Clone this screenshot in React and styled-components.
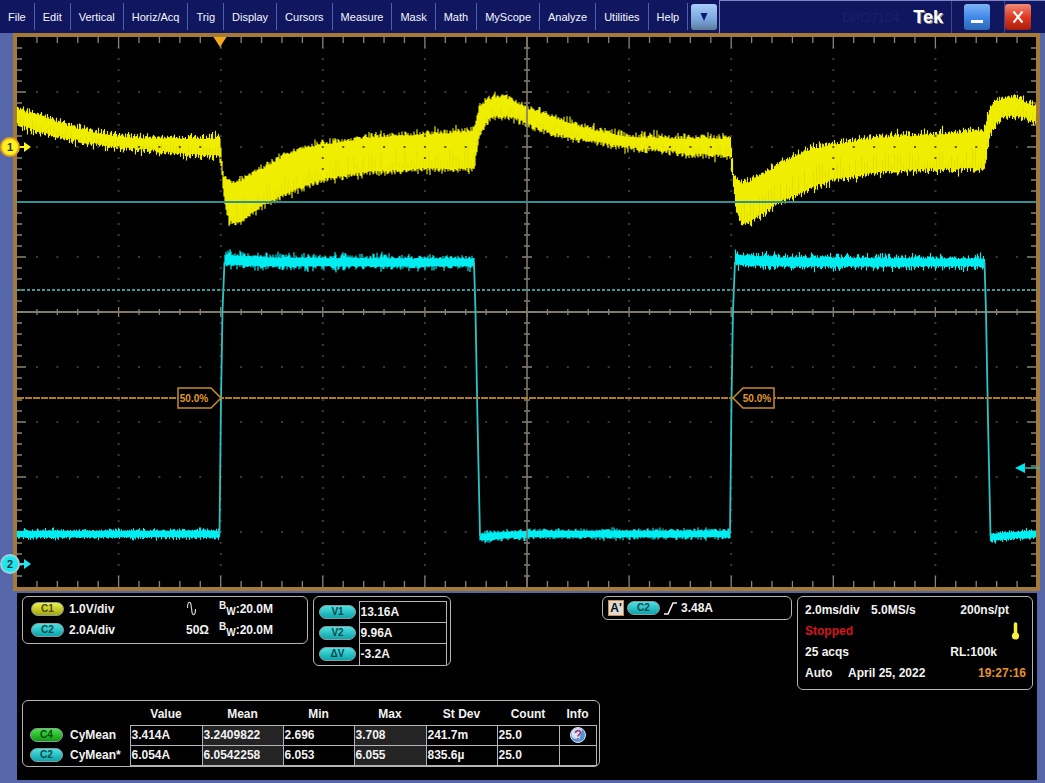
import React from "react";
import styled, { createGlobalStyle } from "styled-components";

const GlobalStyle = createGlobalStyle`
  * {
    box-sizing: border-box;
  }

  body {
    margin: 0;
    background: #5567a9;
    font-family: "Liberation Sans", Arial, sans-serif;
    color: #f2f2f2;
  }
`;

/* ---------- menu bar ---------- */

const MenuBar = styled.header`
  display: flex;
  height: 33px;
  background: #10175f;
`;

const Menu = styled.nav`
  display: flex;
  align-items: stretch;
  padding: 3px 0;
`;

const MenuItem = styled.button`
  padding: 0 8px;
  border: 0;
  border-right: 1px solid #4a60b0;
  background: none;
  color: #f4f6ff;
  font: 11px "Liberation Sans", Arial, sans-serif;
  white-space: nowrap;
`;

const Brand = styled.div`
  display: flex;
  flex: 1;
  align-items: center;
  justify-content: flex-end;
  margin-left: 2px;
  border-top: 1px solid #7a84c4;
  border-left: 1px solid #7a84c4;
`;

const Model = styled.span`
  margin-right: 14px;
  color: #1a2168;
  font-size: 13px;
`;

const Logo = styled.span`
  padding-right: 8px;
  color: #fff;
  font-size: 18px;
  font-weight: bold;
  text-shadow: 1px 1px 0 #8a8a8a;
`;

const WindowSlot = styled.div`
  display: flex;
  align-items: center;
  justify-content: flex-end;
  align-self: stretch;
  width: ${(props) => props.$width}px;
  padding-right: 14px;
  border-left: 1px solid #3b4690;
`;

const SquareButton = styled.button`
  display: flex;
  align-items: center;
  justify-content: center;
  align-self: center;
  width: 26px;
  height: 26px;
  padding: 0;
  border: 0;
  border-radius: 3px;
  background: ${(props) => props.$fill};
`;

const MoreButton = styled(SquareButton)`
  margin-left: 3px;
`;

/* ---------- scope screen ---------- */

const Screen = styled.main`
  margin: 0 5px 0 13px;
  border: 4px solid #a57a36;
  background: #000;
`;

const Plot = styled.svg`
  display: block;
  width: 100%;
  overflow: visible;
`;

/* ---------- readouts ---------- */

const Readouts = styled.section`
  display: flex;
  flex-direction: column;
  align-items: flex-start;
  gap: 10px;
  margin: 2px 8px 4px 17px;
  padding: 3px 4px 13px 5px;
  background: #000;
  font-size: 12px;
  font-weight: bold;
`;

const TopRow = styled.div`
  display: flex;
  align-items: flex-start;
  align-self: stretch;
  gap: 5px;
`;

const Box = styled.div`
  border: 1px solid #b4b4b4;
  border-radius: 6px;
`;

const ChannelBox = styled(Box)`
  width: 286px;
  padding: 1px 8px 3px;
`;

const ChannelRow = styled.div`
  display: grid;
  grid-template-columns: 38px 117px 33px 1fr;
  align-items: center;
  height: 21px;
`;

const Pill = styled.span`
  display: inline-block;
  width: ${(props) => props.$width || 33}px;
  height: 14px;
  border: 1px solid #8c9c9c;
  border-radius: 7px;
  background: linear-gradient(${(props) => props.$from}, ${(props) => props.$to});
  color: ${(props) => props.$ink};
  font-size: 10px;
  line-height: 12px;
  text-align: center;
  vertical-align: middle;
`;

const Limit = styled.span`
  display: flex;
  align-items: center;

  sup,
  sub {
    height: 16px;
    font-size: 10px;
    line-height: 10px;
  }

  sub {
    padding-top: 6px;
  }
`;

const CursorBox = styled(Box)`
  width: 138px;
  padding: 4px 3px 0 5px;
`;

const CursorTable = styled.table`
  width: 100%;
  border-collapse: collapse;

  th {
    width: 40px;
    height: 21px;
    padding: 0;
    line-height: 14px;
    text-align: left;
  }

  td {
    padding: 0 1px;
    border: 1px solid #b4b4b4;
  }

  tr:last-child td {
    border-bottom: 0;
  }
`;

const TriggerBox = styled(Box)`
  display: flex;
  align-items: center;
  gap: 3px;
  width: 190px;
  height: 24px;
  margin-left: auto;
  padding-left: 5px;
`;

const Badge = styled.span`
  width: 16px;
  height: 16px;
  border: 1px solid #d08a4a;
  background: #dcdcdc;
  color: #111;
  line-height: 14px;
  text-align: center;
`;

const TimeBox = styled(Box)`
  width: 236px;
  height: 94px;
  padding: 2px 6px 0 7px;
`;

const TimeRow = styled.div`
  display: flex;
  align-items: center;
  height: 21px;
  padding-right: ${(props) => props.$inset || 0}px;
  color: ${(props) => props.$color || "inherit"};
`;

const First = styled.span`
  min-width: ${(props) => props.$width}px;
`;

const Last = styled.span`
  display: flex;
  margin-left: auto;
  color: ${(props) => props.$color || "inherit"};
`;

const MeasureBox = styled(Box)`
  padding: 3px 2px 0 7px;
`;

const MeasureTable = styled.table`
  border-collapse: collapse;
  table-layout: fixed;
  width: 566px;

  th {
    padding: 0;
  }

  thead th {
    height: 21px;
  }

  tbody th {
    height: 20px;
    text-align: left;
    white-space: nowrap;
  }

  td {
    padding: 0 1px;
    border: 1px solid #b4b4b4;
  }

  td:nth-child(3),
  td:nth-child(5) {
    background: #242424;
  }

  td:last-child {
    text-align: center;
  }
`;

const Name = styled.span`
  margin-left: 7px;
  vertical-align: middle;
`;

const InfoButton = styled.button`
  display: block;
  width: 16px;
  height: 16px;
  margin: 0 auto;
  padding: 0;
  border: 0;
  background: none;
`;

/* ---------- data ---------- */

const MENUS = [
  "File",
  "Edit",
  "Vertical",
  "Horiz/Acq",
  "Trig",
  "Display",
  "Cursors",
  "Measure",
  "Mask",
  "Math",
  "MyScope",
  "Analyze",
  "Utilities",
  "Help",
];

const CYAN = { $from: "#4fe0e0", $to: "#0aa5ab", $ink: "#07484c" };
const YELLOW = { $from: "#eef04a", $to: "#a3a60c", $ink: "#4a4a05" };
const GREEN = { $from: "#4be04b", $to: "#0d9a12", $ink: "#064a08" };

const CURSORS = [
  ["V1", "13.16A"],
  ["V2", "9.96A"],
  ["ΔV", "-3.2A"],
];

const COLUMNS = [
  ["Value", 72],
  ["Mean", 81],
  ["Min", 71],
  ["Max", 72],
  ["St Dev", 71],
  ["Count", 62],
  ["Info", 37],
];

const MEASUREMENTS = [
  {
    source: "C4",
    pill: GREEN,
    name: "CyMean",
    values: ["3.414A", "3.2409822", "2.696", "3.708", "241.7m", "25.0"],
    info: true,
  },
  {
    source: "C2",
    pill: CYAN,
    name: "CyMean*",
    values: ["6.054A", "6.0542258", "6.053", "6.055", "835.6µ", "25.0"],
    info: false,
  },
];

/* ---------- traces ---------- */

const LEFT = 17;
const RIGHT = 1036;
const TOP = 37;
const BOTTOM = 587;
const CX = 527;
const CY = 312;
const DIV_X = 102.1;
const DIV_Y = 55;
const PERIOD = 510.5;

// one load cycle of each trace: [x, upper edge, lower edge]
const VOLTAGE = [
  [220, 139, 156],
  [221, 152, 166],
  [223, 175, 184],
  [225, 179, 204],
  [229, 183, 219],
  [233, 184, 223],
  [240, 182, 221],
  [250, 176, 214],
  [265, 168, 203],
  [280, 159, 196],
  [300, 150, 187],
  [322, 145, 179],
  [350, 141, 174],
  [370, 138, 171],
  [424, 135, 168],
  [474, 132, 168],
  [477, 118, 148],
  [480, 108, 133],
  [485, 103, 123],
  [492, 99, 116],
  [500, 98, 115],
  [510, 100, 116],
  [520, 105, 119],
  [530, 110, 124],
  [543, 115, 129],
  [560, 120, 134],
  [580, 127, 138],
  [600, 132, 142],
  [628, 137, 147],
  [660, 139, 149],
  [690, 139, 153],
  [730.5, 139, 155],
];

const CURRENT_HIGH = [
  [225, 255, 264],
  [240, 256, 265],
  [280, 258, 266],
  [474, 259, 266],
];

const CURRENT_LOW = [
  [480, 534, 540],
  [490, 533, 540],
  [505, 532, 538],
  [530, 531, 537],
  [730.5, 531, 537],
];

function makeNoise(seed) {
  let s = seed;
  return () => {
    s = (s * 16807) % 2147483647;
    return s / 2147483647;
  };
}

function edgesAt(points, x) {
  let i = 1;
  while (i < points.length - 1 && points[i][0] < x) i++;
  const [x0, t0, b0] = points[i - 1];
  const [x1, t1, b1] = points[i];
  const k = (x - x0) / (x1 - x0);
  return [t0 + (t1 - t0) * k, b0 + (b1 - b0) * k];
}

function band(points, spread, ripple, seed) {
  const noise = makeNoise(seed);
  let d = "";
  for (let cycle = -1; cycle <= 1; cycle++) {
    const shift = cycle * PERIOD;
    const end = points[points.length - 1][0];
    for (let x = points[0][0]; x <= end; x++) {
      const px = x + shift;
      if (px < LEFT || px > RIGHT) continue;
      const [top, bottom] = edgesAt(points, x);
      const up = noise() * noise() * spread + (x % 3 === 0 ? ripple : 0);
      const down = noise() * noise() * spread + (x % 3 === 1 ? ripple : 0);
      d += `M${px.toFixed(1)} ${(top - up).toFixed(1)}V${(bottom + down).toFixed(1)}`;
    }
  }
  return d;
}

// faint vertical streaks inside the voltage band
function streaks() {
  const noise = makeNoise(8111);
  let d = "";
  for (let cycle = -1; cycle <= 1; cycle++) {
    for (let x = 228; x <= 730; x += 3) {
      const px = x + cycle * PERIOD;
      if (px < LEFT || px > RIGHT) continue;
      const [top, bottom] = edgesAt(VOLTAGE, x);
      const height = bottom - top;
      d += `M${px.toFixed(1)} ${(bottom - height * noise() * 0.6).toFixed(1)}V${bottom.toFixed(1)}`;
    }
  }
  return d;
}

const voltagePath = band(VOLTAGE, 7, 2, 4241);
const streakPath = streaks();
const highPath = band(CURRENT_HIGH, 7, 0, 977);
const lowPath = band(CURRENT_LOW, 4, 0, 5519);

const columnXs = [-4, -3, -2, -1, 1, 2, 3, 4].map((n) => CX + n * DIV_X);
const rowYs = [-4, -3, -2, -1, 1, 2, 3, 4].map((n) => CY + n * DIV_Y);

function underVoltage(x, y) {
  let phase = x;
  while (phase < 220) phase += PERIOD;
  while (phase > 220 + PERIOD) phase -= PERIOD;
  const [top, bottom] = edgesAt(VOLTAGE, phase);
  return y > top && y < bottom;
}

function graticule() {
  let ticks = "";
  let dots = "";
  let darkDots = "";
  const addDot = (x, y) => {
    const dot = `M${x - 1} ${y}h2`;
    if (underVoltage(x, y)) darkDots += dot;
    else dots += dot;
  };
  for (let n = -24; n <= 24; n++) {
    const x = CX + (n * DIV_X) / 5;
    const major = n % 5 === 0;
    const edge = major ? 11 : 6;
    const mid = major ? 5 : 3;
    ticks += `M${x} ${TOP}v${edge}M${x} ${BOTTOM}v${-edge}M${x} ${CY - mid}v${mid * 2}`;
    rowYs.forEach((y) => addDot(x, y));
  }
  for (let n = -24; n <= 24; n++) {
    const y = CY + (n * DIV_Y) / 5;
    const major = n % 5 === 0;
    const edge = major ? 9 : 5;
    const mid = major ? 5 : 3;
    ticks += `M${LEFT} ${y}h${edge}M${RIGHT} ${y}h${-edge}M${CX - mid} ${y}h${mid * 2}`;
    columnXs.forEach((x) => addDot(x, y));
  }
  return { ticks, dots, darkDots };
}

const { ticks, dots, darkDots } = graticule();

const Marker = ({ y, color, ring, label }) => (
  <g>
    <path d={`M20 ${y}h5`} stroke={color} strokeWidth="2" />
    <path d={`M24 ${y - 5}l7 5l-7 5z`} fill={color} />
    <circle cx="10" cy={y} r="9" fill={color} stroke={ring} strokeWidth="2" />
    <text x="10" y={y + 4} fontSize="11" fontWeight="bold" textAnchor="middle" fill="#333">
      {label}
    </text>
  </g>
);

const Scope = () => (
  <Plot viewBox={`${LEFT} ${TOP} ${RIGHT - LEFT} ${BOTTOM - TOP}`} role="img" aria-label="Waveforms">
    <path d={`M${LEFT} ${CY}H${RIGHT}`} stroke="#81796b" strokeWidth="2" />
    <path d={ticks} stroke="#8a8274" strokeWidth="1.3" />
    <path d={dots} stroke="#77736a" strokeWidth="1.2" />

    <path d={voltagePath} stroke="#f0ee00" strokeWidth="1.15" />
    <path d={streakPath} stroke="#e2de00" strokeWidth="1" />
    <path d={darkDots} stroke="#2c2a08" strokeWidth="1.5" />
    <path d={highPath} stroke="#00eef2" strokeWidth="1.15" />
    <path d={lowPath} stroke="#00eef2" strokeWidth="1.15" />
    {[0, PERIOD].map((shift) => (
      <g key={shift} fill="none" stroke="#2cc4c4" strokeWidth="1.8">
        <path d={`M${219.5 + shift} 534L${221 + shift} 400L${222.5 + shift} 310L${224.5 + shift} 262`} />
        <path d={`M${474 + shift} 262L${475.5 + shift} 312L${477.5 + shift} 420L${480 + shift} 536`} />
      </g>
    ))}

    <path d={`M${CX} ${TOP}V${BOTTOM}`} stroke="#81796b" strokeWidth="1.6" />

    <path d={`M${LEFT} 202H${RIGHT}`} stroke="#2f9096" strokeWidth="2" />
    <path d={`M${LEFT} 290H${RIGHT}`} stroke="#3a9b9b" strokeWidth="1.8" strokeDasharray="3 2" />
    <path d={`M${LEFT} 398H${RIGHT}`} stroke="#b07a22" strokeWidth="1.8" strokeDasharray="7 1" />

    <g stroke="#c98a2a" strokeWidth="1.5" fill="#000">
      <path d="M178 388h33l10 10l-10 10h-33z" />
      <path d="M774 388h-31l-10 10l10 10h31z" />
    </g>
    <g fill="#e0982a" fontSize="10" fontWeight="bold" textAnchor="middle">
      <text x="194" y="402">50.0%</text>
      <text x="757" y="402">50.0%</text>
    </g>

    <path d="M213.500 37h13l-6.500 10z" fill="#f5a81c" />
    <path d="M1015 468l10 -5v10z" fill="#00e6ee" />
    <path d="M1024 468h16" stroke="#3fb9ae" strokeWidth="1.5" />

    <Marker y={147} color="#fdf21c" ring="#e8a21c" label="1" />
    <Marker y={564} color="#1ce6ee" ring="#9fd0dc" label="2" />
  </Plot>
);

const BandwidthLimit = () => (
  <Limit>
    <sup>B</sup>
    <sub>W</sub>
    <span>:20.0M</span>
  </Limit>
);

const App = () => {
  return (
    <>
      <GlobalStyle />
      <MenuBar>
        <Menu>
          {MENUS.map((label) => (
            <MenuItem key={label}>{label}</MenuItem>
          ))}
        </Menu>
        <MoreButton aria-label="More menus" $fill="linear-gradient(#a9cdfa, #7ba6dc 60%, #5a7c9c)">
          <svg width="10" height="10" viewBox="0 0 10 10">
            <path d="M1.500 1h7l-3.500 8z" fill="#0c1a6c" />
          </svg>
        </MoreButton>
        <Brand>
          <Model>DPO7104</Model>
          <Logo>Tek</Logo>
          <WindowSlot $width={53}>
            <SquareButton aria-label="Minimize" $fill="linear-gradient(#7db4f6, #3f86e6 55%, #2a66b4)">
              <svg width="14" height="14" viewBox="0 0 14 14">
                <path d="M1 11.500h12" stroke="#fff" strokeWidth="3" />
              </svg>
            </SquareButton>
          </WindowSlot>
          <WindowSlot $width={41}>
            <SquareButton aria-label="Close" $fill="linear-gradient(#f08a78, #e03a20 50%, #a81c0a)">
              <svg width="12" height="14" viewBox="0 0 12 14">
                <path d="M1.500 1.500l9 11M10.500 1.500l-9 11" stroke="#fff" strokeWidth="2" />
              </svg>
            </SquareButton>
          </WindowSlot>
        </Brand>
      </MenuBar>

      <Screen>
        <Scope />
      </Screen>

      <Readouts>
        <TopRow>
          <ChannelBox>
            <ChannelRow>
              <Pill {...YELLOW}>C1</Pill>
              <span>1.0V/div</span>
              <svg width="11" height="15" viewBox="0 0 11 15">
                <path
                  d="M1.500 7C1.500 -0.500 5 -0.500 5.300 6L5.700 9C6 15.500 9.500 15.500 9.500 8"
                  fill="none"
                  stroke="#d0d0d0"
                  strokeWidth="1.200"
                />
              </svg>
              <BandwidthLimit />
            </ChannelRow>
            <ChannelRow>
              <Pill {...CYAN}>C2</Pill>
              <span>2.0A/div</span>
              <span>50Ω</span>
              <BandwidthLimit />
            </ChannelRow>
          </ChannelBox>

          <CursorBox>
            <CursorTable>
              <tbody>
                {CURSORS.map(([label, value]) => (
                  <tr key={label}>
                    <th scope="row">
                      <Pill {...CYAN} $width={37}>
                        {label}
                      </Pill>
                    </th>
                    <td>{value}</td>
                  </tr>
                ))}
              </tbody>
            </CursorTable>
          </CursorBox>

          <TriggerBox>
            <Badge>A'</Badge>
            <Pill {...CYAN}>C2</Pill>
            <svg width="15" height="13" viewBox="0 0 15 13">
              <path d="M1 12h4l5 -11h4" fill="none" stroke="#f2f2f2" strokeWidth="1.600" />
            </svg>
            <span>3.48A</span>
          </TriggerBox>

          <TimeBox>
            <TimeRow $inset={17}>
              <First $width={66}>2.0ms/div</First>
              <span>5.0MS/s</span>
              <Last>200ns/pt</Last>
            </TimeRow>
            <TimeRow $color="#d8141c" $inset={6}>
              <span>Stopped</span>
              <Last>
                <svg width="9" height="18" viewBox="0 0 9 18">
                  <path d="M4.500 2v12" stroke="#f6f03c" strokeWidth="3.500" strokeLinecap="round" />
                  <circle cx="4.500" cy="14" r="3.600" fill="#f6f03c" />
                </svg>
              </Last>
            </TimeRow>
            <TimeRow $inset={29}>
              <span>25 acqs</span>
              <Last>RL:100k</Last>
            </TimeRow>
            <TimeRow>
              <First $width={43}>Auto</First>
              <span>April 25, 2022</span>
              <Last $color="#e8932a">19:27:16</Last>
            </TimeRow>
          </TimeBox>
        </TopRow>

        <MeasureBox>
          <MeasureTable>
            <colgroup>
              <col style={{ width: 100 }} />
              {COLUMNS.map(([label, width]) => (
                <col key={label} style={{ width }} />
              ))}
            </colgroup>
            <thead>
              <tr>
                <th />
                {COLUMNS.map(([label]) => (
                  <th key={label} scope="col">
                    {label}
                  </th>
                ))}
              </tr>
            </thead>
            <tbody>
              {MEASUREMENTS.map((row) => (
                <tr key={row.source}>
                  <th scope="row">
                    <Pill {...row.pill}>{row.source}</Pill>
                    <Name>{row.name}</Name>
                  </th>
                  {row.values.map((value, i) => (
                    <td key={i}>{value}</td>
                  ))}
                  <td>
                    {row.info && (
                      <InfoButton aria-label="Measurement info">
                        <svg width="16" height="16" viewBox="0 0 16 16">
                          <circle cx="8" cy="8" r="7.500" fill="#4f93d8" stroke="#dbe8f4" />
                          <path d="M3 11A6 6 0 0 1 12 3L9 13z" fill="#d6e4f6" />
                          <path
                            d="M5.500 6C5.500 3 10.500 3 10.500 5.500C10.500 7.500 8 7.500 8 9.500M7.800 11v1.800"
                            fill="none"
                            stroke="#a8407c"
                            strokeWidth="1.800"
                          />
                        </svg>
                      </InfoButton>
                    )}
                  </td>
                </tr>
              ))}
            </tbody>
          </MeasureTable>
        </MeasureBox>
      </Readouts>
    </>
  );
};

export default App;
